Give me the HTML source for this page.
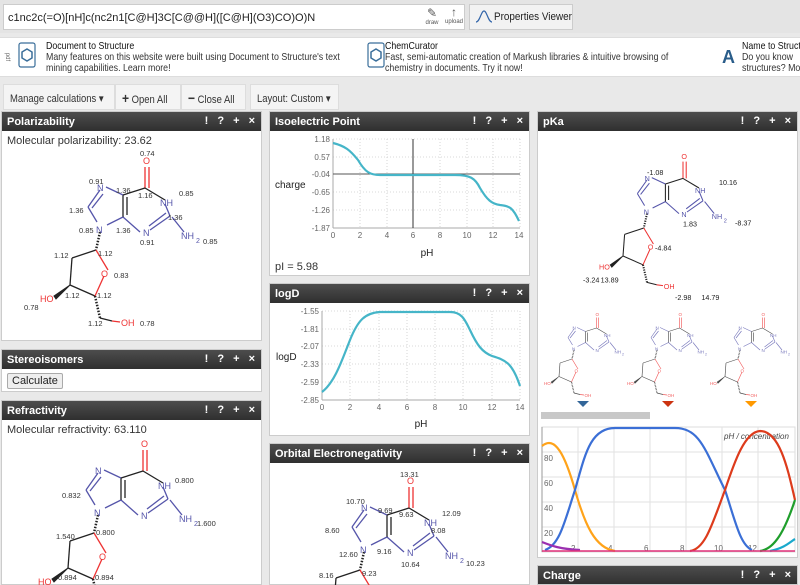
<!DOCTYPE html>
<html><head><meta charset="utf-8"><style>
*{box-sizing:border-box;margin:0;padding:0}
body{width:800px;height:585px;overflow:hidden;background:#e9e9e9;font-family:"Liberation Sans",sans-serif;font-size:11px;color:#222;position:relative;white-space:nowrap}
.abs{position:absolute}
.top{left:0;top:0;width:800px;height:33px;background:#e4e4e4}
.inp{left:3px;top:4px;width:462px;height:26px;background:#fff;border:1px solid #ccc;font-size:11px;padding:7px 4px}
.pv{left:469px;top:4px;width:104px;height:26px;background:#f2f2f2;border:1px solid #ccc;font-size:11px;padding:6px 0 0 24px}
.banner{left:0;top:37px;width:800px;height:40px;background:#fff;border-top:1px solid #ddd;border-bottom:1px solid #ddd}
.bt{font-size:10.5px;line-height:11px;color:#333;transform:scaleX(0.84);transform-origin:0 0}
.bt b{font-weight:normal;color:#111}
.tb{top:84px;height:26px;background:#f4f4f4;border:1px solid #ddd;font-size:11px;padding:7px 6px;color:#333;overflow:hidden}
.tb span{display:inline-block;transform:scaleX(0.86);transform-origin:0 0}
.panel{position:absolute;background:#fff;border:1px solid #ccc;overflow:hidden}
.hd{position:absolute;left:0;right:0;top:0;height:19px;background:linear-gradient(#4d4d4d,#2f2f2f);color:#fff;font-weight:bold;font-size:11px;padding:4px 5px}
.ic{position:absolute;right:6px;top:3px;font-weight:bold;font-size:11px;word-spacing:6px}
svg text{font-family:"Liberation Sans",sans-serif}
</style></head><body>
<div class="abs top"></div>
<div class="abs inp">c1nc2c(=O)[nH]c(nc2n1[C@H]3C[C@@H]([C@H](O3)CO)O)N</div>
<div class="abs" style="left:422px;top:6px;font-size:6px;color:#555;text-align:center;width:20px"><span style="font-size:12px">✎</span><br>draw</div>
<div class="abs" style="left:444px;top:5px;font-size:6px;color:#555;text-align:center;width:20px"><span style="font-size:12px;font-weight:bold">↑</span><br>upload</div>
<div class="abs pv"><span style="display:inline-block;transform:scaleX(0.9);transform-origin:0 0">Properties Viewer</span></div>
<svg class="abs" style="left:475px;top:10px" width="18" height="14"><path d="M1,12 C5,12 6,1 9,1 C12,1 13,12 17,12" fill="none" stroke="#3366aa" stroke-width="1.2"/></svg>

<div class="abs banner"></div>
<div class="abs" style="left:3px;top:54px;font-size:6px;color:#666;transform:rotate(90deg)">pdf</div>
<svg class="abs" style="left:18px;top:42px" width="18" height="26"><rect x="1" y="1" width="16" height="24" rx="2" fill="#fff" stroke="#3a6e9a" stroke-width="1.2"/><polygon points="9,7 14,10 14,16 9,19 4,16 4,10" fill="none" stroke="#3a6e9a" stroke-width="1.5"/></svg>
<div class="abs bt" style="left:46px;top:41px"><b>Document to Structure</b><br>Many features on this website were built using Document to Structure's text<br>mining capabilities. Learn more!</div>
<svg class="abs" style="left:367px;top:42px" width="18" height="26"><rect x="1" y="1" width="16" height="24" rx="2" fill="#fff" stroke="#3a6e9a" stroke-width="1.2"/><polygon points="9,7 14,10 14,16 9,19 4,16 4,10" fill="none" stroke="#3a6e9a" stroke-width="1.5"/></svg>
<div class="abs bt" style="left:385px;top:41px"><b>ChemCurator</b><br>Fast, semi-automatic creation of Markush libraries &amp; intuitive browsing of<br>chemistry in documents. Try it now!</div>
<div class="abs" style="left:722px;top:47px;font-size:18px;font-weight:bold;color:#2a5d8a">A</div>
<div class="abs bt" style="left:742px;top:41px"><b>Name to Structure</b><br>Do you know<br>structures? More</div>

<div class="abs tb" style="left:3px;width:112px"><span>Manage calculations ▾</span></div>
<div class="abs tb" style="left:115px;width:66px;padding-top:5px"><span><b style="font-size:14px">+</b> Open All</span></div>
<div class="abs tb" style="left:181px;width:65px;padding-top:5px"><span><b style="font-size:14px">−</b> Close All</span></div>
<div class="abs tb" style="left:250px;width:89px"><span>Layout: Custom ▾</span></div>

<div class="panel" style="left:1px;top:111px;width:261px;height:230px"><div class="hd">Polarizability<span class="ic">! ? + ×</span></div>
<div class="abs" style="left:5px;top:23px;color:#333">Molecular polarizability: 23.62</div></div>
<div class="panel" style="left:1px;top:349px;width:261px;height:43px"><div class="hd">Stereoisomers<span class="ic">! ? + ×</span></div>
<div class="abs" style="left:5px;top:23px;border:1px solid #aaa;background:#eee;padding:1px 4px;border-radius:2px">Calculate</div></div>
<div class="panel" style="left:1px;top:400px;width:261px;height:185px"><div class="hd">Refractivity<span class="ic">! ? + ×</span></div>
<div class="abs" style="left:5px;top:23px;color:#333">Molecular refractivity: 63.110</div></div>

<div class="panel" style="left:269px;top:111px;width:261px;height:165px"><div class="hd">Isoelectric Point<span class="ic">! ? + ×</span></div>
<div class="abs" style="left:5px;top:149px;color:#333">pI = 5.98</div></div>
<div class="panel" style="left:269px;top:283px;width:261px;height:153px"><div class="hd">logD<span class="ic">! ? + ×</span></div></div>
<div class="panel" style="left:269px;top:443px;width:261px;height:142px"><div class="hd">Orbital Electronegativity<span class="ic">! ? + ×</span></div></div>

<div class="panel" style="left:537px;top:111px;width:261px;height:447px"><div class="hd">pKa<span class="ic">! ? + ×</span></div></div>
<div class="panel" style="left:537px;top:565px;width:261px;height:20px"><div class="hd">Charge<span class="ic">! ? + ×</span></div></div>

<svg class="abs" style="left:0;top:0" width="800" height="585" font-size="8">
<defs>
<g id="mol" fill="none" stroke-width="1.3">
 <line x1="145" y1="188" x2="145" y2="167" stroke="#e33"/><line x1="149" y1="188" x2="149" y2="167" stroke="#e33"/>
 <line x1="145" y1="188" x2="165" y2="200" stroke="#222"/>
 <line x1="165" y1="204" x2="170" y2="216" stroke="#55a"/>
 <line x1="170" y1="216" x2="150" y2="230" stroke="#55a"/><line x1="166" y1="213" x2="149" y2="226" stroke="#55a"/>
 <line x1="172" y1="217" x2="184" y2="232" stroke="#55a"/>
 <line x1="140" y1="232" x2="123" y2="217" stroke="#55a"/>
 <line x1="123" y1="217" x2="123" y2="195" stroke="#222"/><line x1="127" y1="215" x2="127" y2="197" stroke="#222"/>
 <line x1="123" y1="195" x2="145" y2="188" stroke="#222"/>
 <line x1="123" y1="195" x2="106" y2="187" stroke="#55a"/>
 <line x1="100" y1="190" x2="88" y2="207" stroke="#55a"/><line x1="103" y1="194" x2="92" y2="208" stroke="#55a"/>
 <line x1="88" y1="207" x2="97" y2="222" stroke="#55a"/>
 <line x1="123" y1="217" x2="107" y2="225" stroke="#55a"/>
 <line x1="100" y1="232" x2="96" y2="250" stroke="#222" stroke-dasharray="1.5 1.5" stroke-width="2.5"/>
 <line x1="96" y1="250" x2="72" y2="258" stroke="#222"/>
 <line x1="72" y1="258" x2="70" y2="285" stroke="#222"/>
 <line x1="70" y1="285" x2="95" y2="296" stroke="#222"/>
 <line x1="95" y1="296" x2="104" y2="276" stroke="#e33"/>
 <line x1="108" y1="270" x2="96" y2="250" stroke="#e33"/>
 <path d="M70,285 L54,296 L56,299 Z" fill="#222" stroke="#222" stroke-width="1"/>
 <line x1="95" y1="296" x2="100" y2="318" stroke="#222" stroke-dasharray="1.5 1.5" stroke-width="2.5"/>
 <line x1="100" y1="318" x2="112" y2="321" stroke="#222"/><line x1="112" y1="321" x2="120" y2="322" stroke="#e33"/>
</g>
<g id="atoms" font-size="9">
 <text x="143" y="164" fill="#e33">O</text>
 <text x="160" y="206" fill="#55a">NH</text>
 <text x="143" y="236" fill="#55a">N</text>
 <text x="181" y="239" fill="#55a">NH</text><text x="196" y="243" fill="#55a" font-size="7">2</text>
 <text x="97" y="191" fill="#55a">N</text>
 <text x="96" y="233" fill="#55a">N</text>
 <text x="101" y="277" fill="#e33">O</text>
 <text x="40" y="302" fill="#e33">HO</text>
 <text x="121" y="326" fill="#e33">OH</text>
</g>
</defs>
<use href="#mol"/><use href="#atoms"/>
<g fill="#333" font-size="7.5">
<text x="140" y="156">0.74</text><text x="89" y="184">0.91</text><text x="116" y="193">1.36</text><text x="138" y="198">1.16</text><text x="179" y="196">0.85</text><text x="69" y="213">1.36</text><text x="168" y="220">1.36</text><text x="79" y="233">0.85</text><text x="116" y="233">1.36</text><text x="140" y="245">0.91</text><text x="203" y="244">0.85</text><text x="54" y="258">1.12</text><text x="98" y="256">1.12</text><text x="114" y="278">0.83</text><text x="65" y="298">1.12</text><text x="97" y="298">1.12</text><text x="24" y="310">0.78</text><text x="88" y="326">1.12</text><text x="140" y="326">0.78</text></g>
<g transform="translate(-2,283)"><use href="#mol"/><use href="#atoms"/>
<g fill="#333" font-size="7.5"><text x="177" y="200">0.800</text><text x="64" y="215">0.832</text><text x="199" y="243">1.600</text><text x="58" y="256">1.540</text><text x="98" y="252">0.800</text><text x="60" y="297">0.894</text><text x="97" y="297">0.894</text></g></g>
<g transform="translate(264,320)"><use href="#mol"/><use href="#atoms"/>
<g fill="#333" font-size="7.5"><text x="136" y="157">13.31</text><text x="82" y="184">10.70</text><text x="114" y="193">9.69</text><text x="135" y="197">9.63</text><text x="178" y="196">12.09</text><text x="61" y="213">8.60</text><text x="167" y="213">8.08</text><text x="75" y="237">12.60</text><text x="113" y="234">9.16</text><text x="137" y="247">10.64</text><text x="202" y="246">10.23</text><text x="55" y="258">8.16</text><text x="98" y="256">9.23</text></g></g>
<g transform="translate(567,28) scale(0.8)"><use href="#mol"/><use href="#atoms"/>
<g fill="#222" font-size="9"><text x="100" y="184">-1.08</text><text x="190" y="196">10.16</text><text x="210" y="247">-8.37</text><text x="145" y="248">1.83</text><text x="110" y="278">-4.84</text><text x="20" y="318">-3.24</text><text x="42" y="318">13.89</text><text x="135" y="340">-2.98</text><text x="168" y="340">14.79</text></g></g>
<g transform="translate(524,234) scale(0.5)" opacity="0.8"><use href="#mol"/><use href="#atoms"/></g>
<g transform="translate(607,234) scale(0.5)" opacity="0.8"><use href="#mol"/><use href="#atoms"/></g>
<g transform="translate(690,234) scale(0.5)" opacity="0.8"><use href="#mol"/><use href="#atoms"/></g>
<polygon points="577,401 589,401 583,407" fill="#336699"/><polygon points="662,401 674,401 668,407" fill="#cc3311"/><polygon points="745,401 757,401 751,407" fill="#ff9900"/>
<rect x="541" y="412" width="109" height="7" fill="#c8c8c8"/>

<g stroke="#ccc" stroke-dasharray="1 2" stroke-width="0.8">
<line x1="333" y1="139" x2="520" y2="139"/><line x1="333" y1="157" x2="520" y2="157"/><line x1="333" y1="192" x2="520" y2="192"/><line x1="333" y1="210" x2="520" y2="210"/>
<line x1="360" y1="139" x2="360" y2="228"/><line x1="387" y1="139" x2="387" y2="228"/><line x1="440" y1="139" x2="440" y2="228"/><line x1="467" y1="139" x2="467" y2="228"/><line x1="493" y1="139" x2="493" y2="228"/><line x1="520" y1="139" x2="520" y2="228"/>
</g>
<line x1="333" y1="139" x2="333" y2="228" stroke="#aaa"/><line x1="333" y1="228" x2="520" y2="228" stroke="#aaa"/>
<line x1="333" y1="174" x2="520" y2="174" stroke="#555"/><line x1="413" y1="139" x2="413" y2="228" stroke="#333"/>
<path d="M333,143 C345,146 350,150 358,160 C365,172 370,175 380,175 L455,175 C470,175 475,178 480,188 C487,200 492,204 500,205 C510,206 513,208 519,221" fill="none" stroke="#45b5c8" stroke-width="2.2"/>
<g fill="#666" font-size="8" text-anchor="end"><text x="330" y="142">1.18</text><text x="330" y="160">0.57</text><text x="330" y="177">-0.04</text><text x="330" y="195">-0.65</text><text x="330" y="213">-1.26</text><text x="330" y="231">-1.87</text></g>
<g fill="#666" font-size="8" text-anchor="middle"><text x="333" y="238">0</text><text x="360" y="238">2</text><text x="387" y="238">4</text><text x="413" y="238">6</text><text x="440" y="238">8</text><text x="467" y="238">10</text><text x="493" y="238">12</text><text x="519" y="238">14</text></g>
<text x="275" y="188" font-size="10" fill="#222">charge</text><text x="427" y="256" font-size="10" fill="#222" text-anchor="middle">pH</text>

<g stroke="#ccc" stroke-dasharray="1 2" stroke-width="0.8">
<line x1="322" y1="311" x2="520" y2="311"/><line x1="322" y1="329" x2="520" y2="329"/><line x1="322" y1="346" x2="520" y2="346"/><line x1="322" y1="364" x2="520" y2="364"/><line x1="322" y1="382" x2="520" y2="382"/>
<line x1="350" y1="311" x2="350" y2="400"/><line x1="379" y1="311" x2="379" y2="400"/><line x1="407" y1="311" x2="407" y2="400"/><line x1="435" y1="311" x2="435" y2="400"/><line x1="463" y1="311" x2="463" y2="400"/><line x1="492" y1="311" x2="492" y2="400"/><line x1="520" y1="311" x2="520" y2="400"/>
</g>
<line x1="322" y1="311" x2="322" y2="400" stroke="#aaa"/><line x1="322" y1="400" x2="520" y2="400" stroke="#aaa"/>
<path d="M322,392 C335,382 342,360 350,340 C358,320 365,313 380,312 L450,312 C462,312 465,320 470,330 C477,345 482,352 492,356 C505,360 512,362 520,386" fill="none" stroke="#45b5c8" stroke-width="2.2"/>
<g fill="#666" font-size="8" text-anchor="end"><text x="319" y="314">-1.55</text><text x="319" y="332">-1.81</text><text x="319" y="349">-2.07</text><text x="319" y="367">-2.33</text><text x="319" y="385">-2.59</text><text x="319" y="403">-2.85</text></g>
<g fill="#666" font-size="8" text-anchor="middle"><text x="322" y="410">0</text><text x="350" y="410">2</text><text x="379" y="410">4</text><text x="407" y="410">6</text><text x="435" y="410">8</text><text x="463" y="410">10</text><text x="492" y="410">12</text><text x="520" y="410">14</text></g>
<text x="276" y="360" font-size="10" fill="#222">logD</text><text x="421" y="427" font-size="10" fill="#222" text-anchor="middle">pH</text>

<rect x="542" y="427" width="253" height="125" fill="#fff" stroke="#ddd"/>
<g stroke="#e2e2e2" stroke-width="1">
<line x1="542" y1="452" x2="795" y2="452"/><line x1="542" y1="477" x2="795" y2="477"/><line x1="542" y1="502" x2="795" y2="502"/><line x1="542" y1="527" x2="795" y2="527"/>
<line x1="578" y1="427" x2="578" y2="552"/><line x1="614" y1="427" x2="614" y2="552"/><line x1="650" y1="427" x2="650" y2="552"/><line x1="686" y1="427" x2="686" y2="552"/><line x1="722" y1="427" x2="722" y2="552"/><line x1="758" y1="427" x2="758" y2="552"/>
</g>
<line x1="542" y1="427" x2="542" y2="552" stroke="#999"/>
<g fill="#666" font-size="8"><text x="544" y="461">80</text><text x="544" y="486">60</text><text x="544" y="511">40</text><text x="544" y="536">20</text><text x="571" y="551">2</text><text x="608" y="551">4</text><text x="644" y="551">6</text><text x="680" y="551">8</text><text x="714" y="551">10</text><text x="748" y="551">12</text></g>
<text x="724" y="439" font-size="8" fill="#444" font-style="italic">pH / concentration</text>
<g fill="none" stroke-width="2.2">
<path d="M542,446 C555,435 565,455 575,490 C585,525 595,548 615,551" stroke="#ffa31a"/>
<path d="M545,550 C560,545 565,520 575,490 C585,455 590,428 615,428 L675,428 C700,428 705,450 725,490 C735,520 740,545 752,550" stroke="#3b6fd6"/>
<path d="M690,551 C705,549 712,525 725,490 C735,460 745,432 760,431 C780,431 788,470 795,500" stroke="#dd3b1c"/>
<path d="M760,551 C775,549 785,530 795,500" stroke="#1f9e2c"/>
<path d="M770,551 C785,548 790,542 795,539" stroke="#1aa9cc"/>
<path d="M542,542 C552,546 560,549 580,550" stroke="#9b30b0"/>
<path d="M542,551 L795,551" stroke="#e0307a" stroke-width="1.6"/>
</g>
</svg>
</body></html>
